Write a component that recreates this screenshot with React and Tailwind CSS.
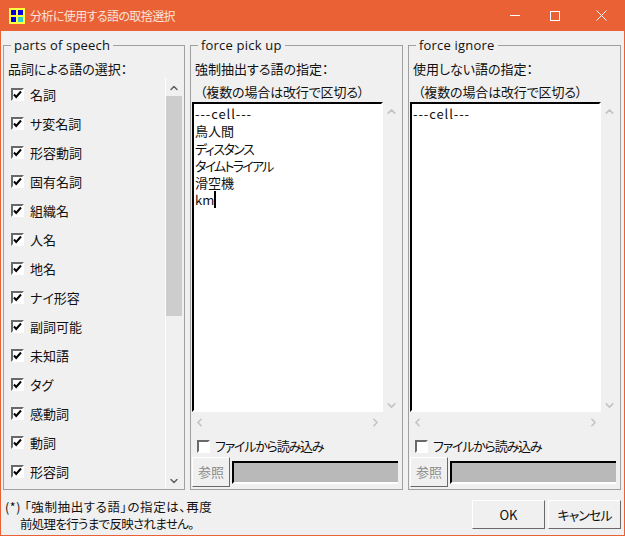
import { ChevronUp, ChevronDown, ChevronLeft, ChevronRight } from "lucide-react";

const parts = ["名詞", "サ変名詞", "形容動詞", "固有名詞", "組織名", "人名", "地名", "ナイ形容", "副詞可能", "未知語", "タグ", "感動詞", "動詞", "形容詞"];

function CheckBox({ checked }) {
  return (
    <span className="w-[13px] h-[13px] shrink-0 bg-white border-2 border-t-[#696969] border-l-[#696969] border-r-white border-b-white flex items-center justify-center">
      {checked && (
        <svg width="9" height="9" viewBox="0 0 9 9">
          <path d="M1 4.5 L3.2 7 L8 1.5" fill="none" stroke="#000" strokeWidth="2" />
        </svg>
      )}
    </span>
  );
}

function Group({ title, className, children }) {
  return (
    <fieldset className={"border border-[#a0a0a0] min-w-0 flex flex-col " + className}>
      <legend className="ml-[7px] px-[3px] text-[13px] leading-[14px] tracking-[0.2px] font-['Open_Sans',sans-serif] text-[#111]">{title}</legend>
      {children}
    </fieldset>
  );
}

function WordPanel({ title, heading, children }) {
  return (
    <Group title={title} className="w-[213px] h-[452px]">
      <div className="pl-[1px] pr-[3px] flex flex-col">
        <p className="pl-[3px] pt-[8px] text-[13px] leading-[18px] text-[#111]">{heading}</p>
        <p className="pl-[8px] pt-[5px] text-[13px] leading-[18px] text-[#111] tracking-[-0.15px]">（複数の場合は改行で区切る）</p>
        <div className="flex h-[310px] mt-[1px]">
          <div className="w-[191px] border-t-2 border-l-2 border-t-black border-l-black border-r-2 border-b-2 border-r-white border-b-white bg-white pl-[1px] pt-[1px] text-[13px] leading-[17.3px] text-[#111] overflow-hidden">
            {children}
          </div>
          <div className="w-[16px] flex flex-col justify-between items-center pt-[3px] text-[#c4c4c4]">
            <ChevronUp size={13} strokeWidth={3} />
            <ChevronDown size={13} strokeWidth={3} />
          </div>
        </div>
        <div className="h-[19px] pt-[2px] w-[191px] flex justify-between items-center px-[1px] text-[#c4c4c4]">
          <ChevronLeft size={13} strokeWidth={3} />
          <ChevronRight size={13} strokeWidth={3} />
        </div>
        <label className="flex items-center gap-[5px] pl-[5px] pt-[4px] h-[26px] text-[13px] text-[#111]">
          <CheckBox />
          <span className="tracking-[-1.2px]">ファイルから読み込み</span>
        </label>
        <div className="flex items-center gap-[2px] pr-[1px]">
          <button className="w-[38px] h-[30px] bg-[#f0f0f0] border border-t-white border-l-white border-r-[#696969] border-b-[#696969] text-[13px] text-[#8c8c8c]">参照</button>
          <div className="flex-1 h-[23px] bg-[#b9b9b9] border-t-2 border-l-2 border-t-black border-l-black border-b-2 border-b-white" />
        </div>
      </div>
    </Group>
  );
}

export default function App() {
  return (
    <div className="w-[625px] h-[536px] bg-[#f0f0f0] border border-t-0 border-[#ea6136] flex flex-col overflow-hidden font-['Noto_Sans_CJK_JP','Noto_Sans',sans-serif] [font-feature-settings:'palt']">
      <div className="h-[31px] -mx-px shrink-0 bg-[#ea6136] flex items-center text-white">
        <svg className="ml-[9px]" width="16" height="16" viewBox="0 0 16 16">
          <rect width="16" height="16" fill="#ffff40" />
          <rect x="2" y="2" width="5" height="5" fill="#0000e0" />
          <rect x="9" y="2" width="5" height="5" fill="#0000e0" />
          <rect x="2" y="9" width="5" height="5" fill="#0000e0" />
          <rect x="9" y="9" width="5" height="5" fill="#30d0c8" />
        </svg>
        <span className="ml-[5px] text-[12px] tracking-[-0.6px] text-[#fbe3d9]">分析に使用する語の取捨選択</span>
        <div className="ml-auto flex items-center">
          <span className="w-[10px] h-px bg-white mr-[30px]" />
          <span className="w-[10px] h-[10px] border border-white mr-[36px]" />
          <svg className="mr-[18px]" width="11" height="11" viewBox="0 0 11 11">
            <path d="M0.5 0.5 L10.5 10.5 M10.5 0.5 L0.5 10.5" stroke="#fff" fill="none" />
          </svg>
        </div>
      </div>

      <div className="flex pl-[2px] pt-[7px] gap-[5px]">
        <Group title="parts of speech" className="w-[182px] h-[452px]">
          <p className="pl-[4px] pt-[8px] text-[13px] leading-[18px] text-[#111]">品詞による語の選択：</p>
          <div className="flex flex-1 min-h-0 pr-[2px]">
            <div className="flex-1 pl-[7px] pt-[2px] overflow-hidden border-r border-white">
              {parts.map((p) => (
                <div key={p} className="h-[29px] flex items-center gap-[6px] text-[13px] text-[#111]">
                  <CheckBox checked />
                  {p}
                </div>
              ))}
            </div>
            <div className="w-[16px] pt-[2px] flex flex-col items-center">
              <div className="h-[16px] flex items-center text-[#606060]"><ChevronUp size={12} strokeWidth={3} /></div>
              <div className="w-full h-[220px] bg-[#cdcdcd]" />
              <div className="mt-auto h-[16px] flex items-center text-[#606060]"><ChevronDown size={12} strokeWidth={3} /></div>
            </div>
          </div>
        </Group>
        <WordPanel title="force pick up" heading="強制抽出する語の指定：">
          <div className="h-[17.3px] tracking-[0.9px]">---cell---</div>
          <div className="h-[17.3px]">鳥人間</div>
          <div className="h-[17.3px] tracking-[-1.5px]">ディスタンス</div>
          <div className="h-[17.3px] tracking-[-1.75px]">タイムトライアル</div>
          <div className="h-[17.3px]">滑空機</div>
          <div className="h-[17.3px] flex">km<span className="w-[2px] h-[17px] bg-black" /></div>
        </WordPanel>
        <WordPanel title="force ignore" heading="使用しない語の指定：">
          <div className="h-[17.3px] tracking-[0.9px]">---cell---</div>
        </WordPanel>
      </div>

      <div className="flex flex-1 pl-[4px] pr-[3px]">
        <div className="pt-[8px] text-[12.5px] text-[#111]">
          <p className="h-[17px] leading-[17px] tracking-[0.6px]">(*) 「強制抽出する語」の指定は、再度</p>
          <p className="h-[17px] leading-[17px] pl-[15px] tracking-[-0.7px]">前処理を行うまで反映されません。</p>
        </div>
        <div className="ml-auto flex gap-[3px] pt-[10px]">
          <button className="w-[73px] h-[29px] bg-[#f0f0f0] border border-t-white border-l-white border-r-[#696969] border-b-[#696969] text-[13px] text-[#111]">OK</button>
          <button className="w-[73px] h-[29px] bg-[#f0f0f0] border border-t-white border-l-white border-r-[#696969] border-b-[#696969] text-[13px] tracking-[-1px] text-[#111]">キャンセル</button>
        </div>
      </div>
    </div>
  );
}
